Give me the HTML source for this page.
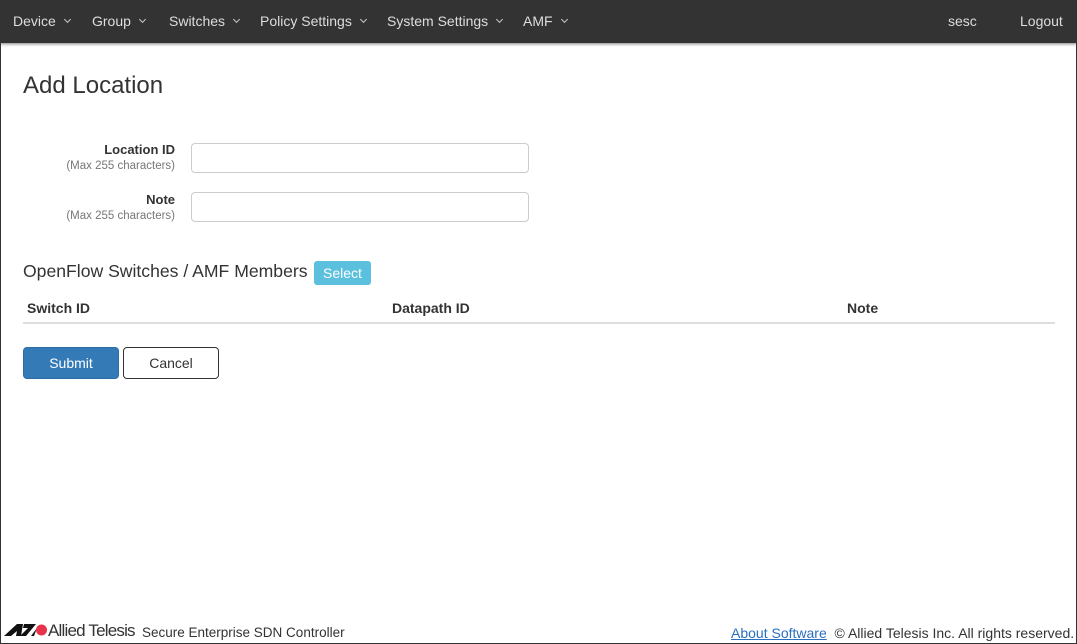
<!DOCTYPE html>
<html><head><meta charset="utf-8"><style>
*{box-sizing:border-box;margin:0;padding:0}
html,body{width:1077px;height:644px;overflow:hidden;background:#fff}
body{font-family:"Liberation Sans",sans-serif;color:#333;position:relative}
.frame{position:absolute;left:0;top:0;width:1077px;height:644px;border:1px solid #333;pointer-events:none}
.nav{position:absolute;left:0;top:0;width:1077px;height:43px;background:#333;box-shadow:0 1px 3px rgba(0,0,0,.5);color:#ddd;font-size:14px}
.nav span{position:absolute;top:13px;white-space:nowrap}
.nav i{display:inline-block;width:5px;height:5px;border-right:1px solid #ccc;border-bottom:1px solid #ccc;transform:rotate(45deg);margin-left:9px;position:relative;top:-4px}
h1{position:absolute;left:23px;top:72px;font-size:24px;font-weight:normal;color:#333}
.lbl{position:absolute;right:902px;text-align:right}
.lbl b{display:block;font-size:13px;color:#333}
.lbl small{display:block;font-size:11.5px;color:#777;margin-top:3px}
.inp{position:absolute;left:191px;width:338px;height:30px;border:1px solid #ccc;border-radius:4px}
h2{position:absolute;left:23px;top:261px;font-size:17.6px;font-weight:normal;color:#333}
.sel{position:absolute;left:314px;top:261px;width:57px;height:24px;background:#5bc0de;border-radius:3px;color:#fff;font-size:14px;text-align:center;line-height:24px}
.th{position:absolute;top:300px;font-size:14px;font-weight:bold;color:#333}
.line{position:absolute;left:23px;top:322px;width:1032px;height:2px;background:#ddd}
.btn{position:absolute;top:347px;height:32px;border-radius:4px;font-size:14px;text-align:center;line-height:30px}
.foot{position:absolute;top:625px;font-size:14px;color:#333;white-space:nowrap}
</style></head><body>
<div class="nav">
<span style="left:13px">Device<i></i></span>
<span style="left:92px">Group<i></i></span>
<span style="left:169px">Switches<i></i></span>
<span style="left:260px">Policy Settings<i></i></span>
<span style="left:387px">System Settings<i></i></span>
<span style="left:523px">AMF<i></i></span>
<span style="left:948px">sesc</span>
<span style="left:1020px">Logout</span>
</div>
<h1>Add Location</h1>
<div class="lbl" style="top:142px"><b>Location ID</b><small>(Max 255 characters)</small></div>
<div class="inp" style="top:143px"></div>
<div class="lbl" style="top:192px"><b>Note</b><small>(Max 255 characters)</small></div>
<div class="inp" style="top:192px"></div>
<h2>OpenFlow Switches / AMF Members</h2>
<div class="sel">Select</div>
<div class="th" style="left:27px">Switch ID</div>
<div class="th" style="left:392px">Datapath ID</div>
<div class="th" style="left:847px">Note</div>
<div class="line"></div>
<div class="btn" style="left:23px;width:96px;background:#337ab7;color:#fff;border:1px solid #2e6da4">Submit</div>
<div class="btn" style="left:123px;width:96px;background:#fff;color:#333;border:1px solid #333">Cancel</div>
<svg style="position:absolute;left:4px;top:623px" width="44" height="14" viewBox="0 0 44 14">
<polygon points="0,13 13,1 19,1 17,13 12,13 13,8 7,13" fill="#111"/>
<polygon points="20,1 32,1 22,13 16,13 24,5 19,5" fill="#111"/>
<polygon points="27,13 33,5 30,13" fill="#111"/>
<circle cx="37.5" cy="7" r="5.5" fill="#e8344a"/>
</svg>
<div class="foot" style="left:48px;top:621px;font-size:17px;letter-spacing:-0.8px">Allied Telesis</div>
<div class="foot" style="left:142px;font-size:13.5px">Secure Enterprise SDN Controller</div>
<div class="foot" style="left:731px"><span style="color:#2a6fc0;text-decoration:underline">About Software</span> &nbsp;© Allied Telesis Inc. All rights reserved.</div>
<div class="frame"></div>
</body></html>
